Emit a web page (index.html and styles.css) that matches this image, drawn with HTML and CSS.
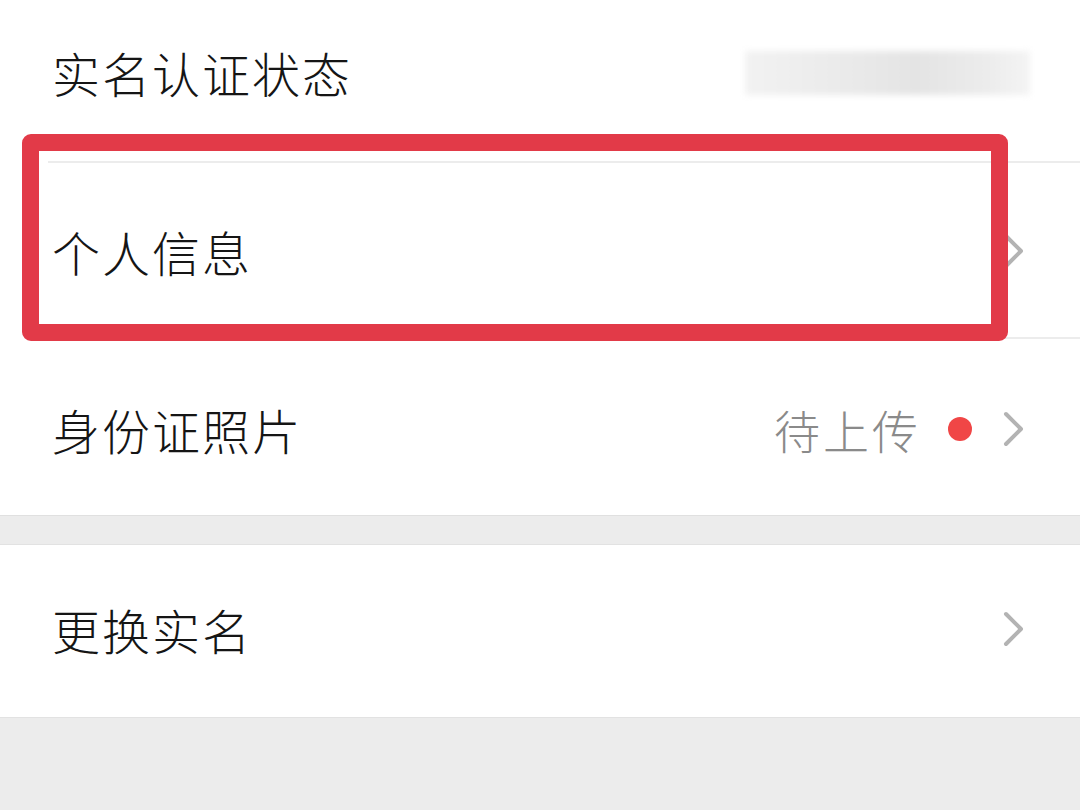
FILE: index.html
```html
<!DOCTYPE html>
<html lang="zh-CN">
<head>
<meta charset="utf-8">
<title>实名认证</title>
<link rel="stylesheet" href="styles.css">
</head>
<body>
<div class="page">
  <section class="group">
    <div class="row row-first">
      <span class="label">实名认证状态</span>
      <span class="blurred"></span>
    </div>
    <div class="row">
      <span class="label">个人信息</span>
      <svg class="chev" viewBox="0 0 24 40" width="24" height="40"><polyline points="5,5 20,20 5,35"/></svg>
    </div>
    <div class="row row-last">
      <span class="label">身份证照片</span>
      <span class="right">
        <span class="status">待上传</span>
        <span class="dot"></span>
        <svg class="chev" viewBox="0 0 24 40" width="24" height="40"><polyline points="5,5 20,20 5,35"/></svg>
      </span>
    </div>
    <div class="highlight"></div>
  </section>
  <section class="group group-two">
    <div class="row row-last row-short">
      <span class="label">更换实名</span>
      <svg class="chev" viewBox="0 0 24 40" width="24" height="40"><polyline points="5,5 20,20 5,35"/></svg>
    </div>
  </section>
</div>
</body>
</html>
```

FILE: styles.css
```css
html, body {
  margin: 0;
  padding: 0;
}
body {
  background: #ececec;
  font-family: "Noto Sans CJK SC", "Noto Sans", sans-serif;
  width: 1080px;
  height: 810px;
  overflow: hidden;
}
.page {
  display: flex;
  flex-direction: column;
}
.group {
  position: relative;
  background: #ffffff;
}
.group-two {
  margin-top: 28px;
  border-top: 1px solid #e2e2e2;
  border-bottom: 1px solid #e2e2e2;
}
.row {
  height: 176px;
  display: flex;
  align-items: center;
  justify-content: space-between;
  padding: 0 55px 0 52px;
  position: relative;
}
.row::after {
  content: "";
  position: absolute;
  left: 48px;
  right: 0;
  bottom: 0;
  height: 2px;
  background: #ececec;
}
.row-last::after {
  display: none;
}
.row-first {
  height: 163px;
  padding-bottom: 20px;
  box-sizing: border-box;
}
.row-last {
  height: 177px;
  padding-top: 4px;
  border-bottom: 1px solid #e0e0e0;
  box-sizing: border-box;
}
.row-short {
  height: 172px;
  padding-top: 0;
  padding-bottom: 4px;
  border-bottom: none;
}
.label {
  font-size: 48px;
  color: #151515;
  letter-spacing: 2px;
  font-weight: 300;
}
.blurred {
  width: 285px;
  height: 44px;
  margin-right: -5px;
  margin-top: 2px;
  background: linear-gradient(90deg, #f2f2f2 0%, #e9e9e9 40%, #e4e4e4 60%, #ececec 85%, #f4f4f4 100%);
  filter: blur(3px);
}
.right {
  display: flex;
  align-items: center;
}
.status {
  font-size: 46px;
  color: #8a8a8a;
  letter-spacing: 3px;
  margin-right: 27px;
  font-weight: 300;
}
.dot {
  width: 24px;
  height: 24px;
  border-radius: 50%;
  background: #f04646;
  margin-right: 29px;
}
.chev {
  display: block;
}
.chev polyline {
  fill: none;
  stroke: #b3b3b3;
  stroke-width: 4;
  stroke-linecap: round;
  stroke-linejoin: round;
}
.highlight {
  position: absolute;
  left: 22px;
  top: 134px;
  width: 986px;
  height: 207px;
  box-sizing: border-box;
  border: 17px solid #e23a48;
  border-radius: 9px;
  z-index: 2;
}
```
